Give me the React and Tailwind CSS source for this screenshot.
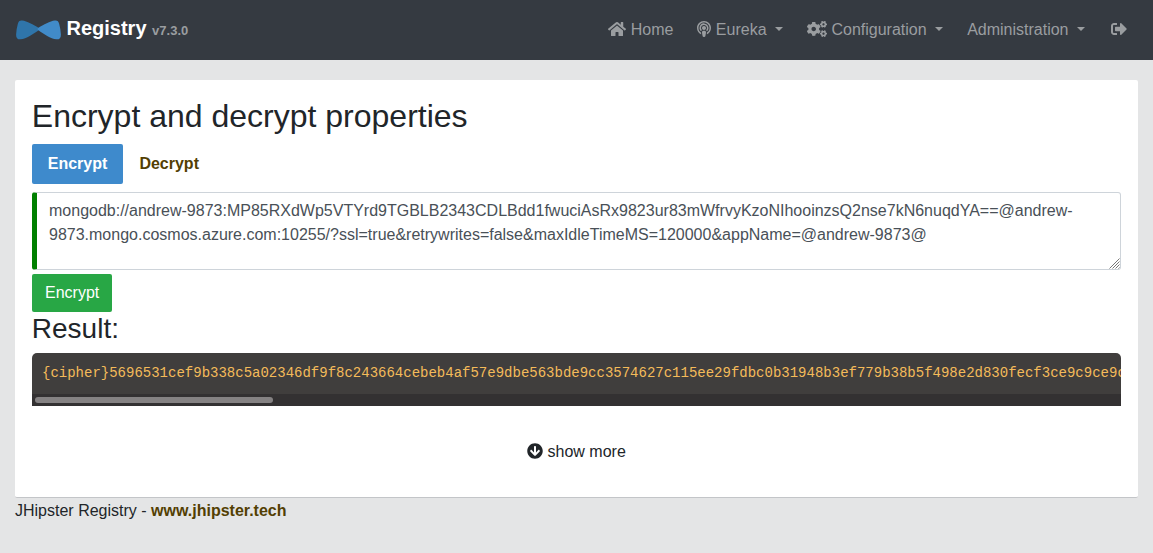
import React from 'react';
import { FaHome, FaPodcast, FaCogs, FaSignOutAlt, FaArrowCircleDown } from 'react-icons/fa';

const SECRET =
  'mongodb://andrew-9873:MP85RXdWp5VTYrd9TGBLB2343CDLBdd1fwuciAsRx9823ur83mWfrvyKzoNIhooinzsQ2nse7kN6nuqdYA==@andrew-9873.mongo.cosmos.azure.com:10255/?ssl=true&retrywrites=false&maxIdleTimeMS=120000&appName=@andrew-9873@';

const CIPHER =
  '{cipher}5696531cef9b338c5a02346df9f8c243664cebeb4af57e9dbe563bde9cc3574627c115ee29fdbc0b31948b3ef779b38b5f498e2d830fecf3ce9c9ce9c';

function BowTie() {
  return (
    <svg className="mb-px h-[20px] w-[45px]" viewBox="0 0 45 20">
      <path d="M23.3 8.3 C17 4.6 11 1.2 6.2 .6 C3.6 .3 2.5 1.4 1.8 4 C.8 7.5 .3 11 .1 14.4 C0 18 1.6 19.5 4.6 19.3 C10.5 19 17 14 23.3 9.7Z" fill="#2f75aa" />
      <path d="M21.7 8.3 C28 4.6 34 1.2 38.8 .6 C41.4 .3 42.5 1.4 43.2 4 C44.2 7.5 44.7 11 44.9 14.4 C45 18 43.4 19.5 40.4 19.3 C34.5 19 28 14 21.7 9.7Z" fill="#418bc9" />
    </svg>
  );
}

function Caret() {
  return <span className="mb-[2px] ml-[8.5px] h-0 w-0 border-x-[4.8px] border-t-[4.8px] border-x-transparent border-t-current" />;
}

function NavItem({ icon, label, caret }) {
  return (
    <a href="#" className="flex items-center px-3 leading-6">
      {icon}
      {label && <span className={icon ? 'ml-[4.4px]' : ''}>{label}</span>}
      {caret && <Caret />}
    </a>
  );
}

function Navbar() {
  return (
    <nav className="flex h-[60px] items-center justify-between bg-[#353a41] pl-4 pr-3 text-[#9a9da0]">
      <a href="#" className="flex items-center">
        <BowTie />
        <span className="ml-[5.5px] pb-px text-xl font-bold leading-[30px] text-white">
          Registry <span className="text-[13px] text-[#9a9da0]">v7.3.0</span>
        </span>
      </a>
      <div className="flex items-center">
        <NavItem icon={<FaHome className="mb-[2px] h-4 w-[18px]" />} label="Home" />
        <NavItem icon={<FaPodcast className="mb-[2px] h-4 w-[14px]" />} label="Eureka" caret />
        <NavItem icon={<FaCogs className="mb-[2px] h-4 w-5" />} label="Configuration" caret />
        <NavItem label="Administration" caret />
        <NavItem icon={<FaSignOutAlt className="mx-0.5 mb-[2px] h-4 w-4" />} />
      </div>
    </nav>
  );
}

function ResizeGrip() {
  return (
    <svg className="pointer-events-none absolute bottom-[1px] right-[1px] h-[11px] w-[11px]" viewBox="0 0 11 11">
      <path d="M.5 10.5 10.5 .5M3.5 10.5 10.5 3.5M6.5 10.5 10.5 6.5M9.5 10.5 10.5 9.5" stroke="#777" strokeWidth="1" fill="none" />
    </svg>
  );
}

export default function App() {
  return (
    <div className="min-h-screen bg-[#e4e5e6] font-['Liberation_Sans',sans-serif] text-base leading-6 text-[#212529]">
      <Navbar />
      <div className="px-[15px] pt-5">
        <main className="h-[418px] rounded-[2px] border-b border-[#c3c5c8] bg-white px-[17px] pt-[17px]">
          <h2 className="-ml-[0.2px] text-[32px] leading-[38.4px]">Encrypt and decrypt properties</h2>
          <div className="mt-[8.6px] flex h-10 font-bold">
            <button className="w-[91px] rounded-[2px] bg-[#3e8acc] text-white">Encrypt</button>
            <button className="pl-[16.4px] pr-4 text-[#533f03]">Decrypt</button>
          </div>
          <div className="relative mt-2">
            <textarea
              className="block h-[78px] w-full resize-none rounded-[3px] border border-l-[5px] border-[#ced4da] border-l-[#008000] bg-white px-3 py-1.5 text-[#495057] outline-none"
              defaultValue={SECRET}
              spellCheck={false}
            />
            <ResizeGrip />
          </div>
          <button className="mt-1 block h-[38px] rounded-[2px] bg-[#28a745] px-[13px] text-white">Encrypt</button>
          <h3 className="-ml-[0.2px] text-[28px] leading-[33.6px]">Result:</h3>
          <div className="mt-[7.4px] h-[53px] overflow-hidden rounded-t-[5px] bg-[#403e3d]">
            <pre className="h-[41px] overflow-hidden px-[10px] pt-[10.5px] font-['Liberation_Mono',monospace] text-sm leading-[21px] text-[#f4bb5a]">{CIPHER}</pre>
            <div className="flex h-3 items-center bg-[#333132] px-[3px]">
              <div className="h-1.5 w-[238px] rounded-full bg-[#858283]" />
            </div>
          </div>
          <div className="mt-[34px] flex items-center justify-center">
            <FaArrowCircleDown className="mb-[2px] mr-[4.4px] h-4 w-4" />
            <span>show more</span>
          </div>
        </main>
        <footer className="mt-px">
          JHipster Registry - <a href="#" className="font-bold text-[#533f03]">www.jhipster.tech</a>
        </footer>
      </div>
    </div>
  );
}
